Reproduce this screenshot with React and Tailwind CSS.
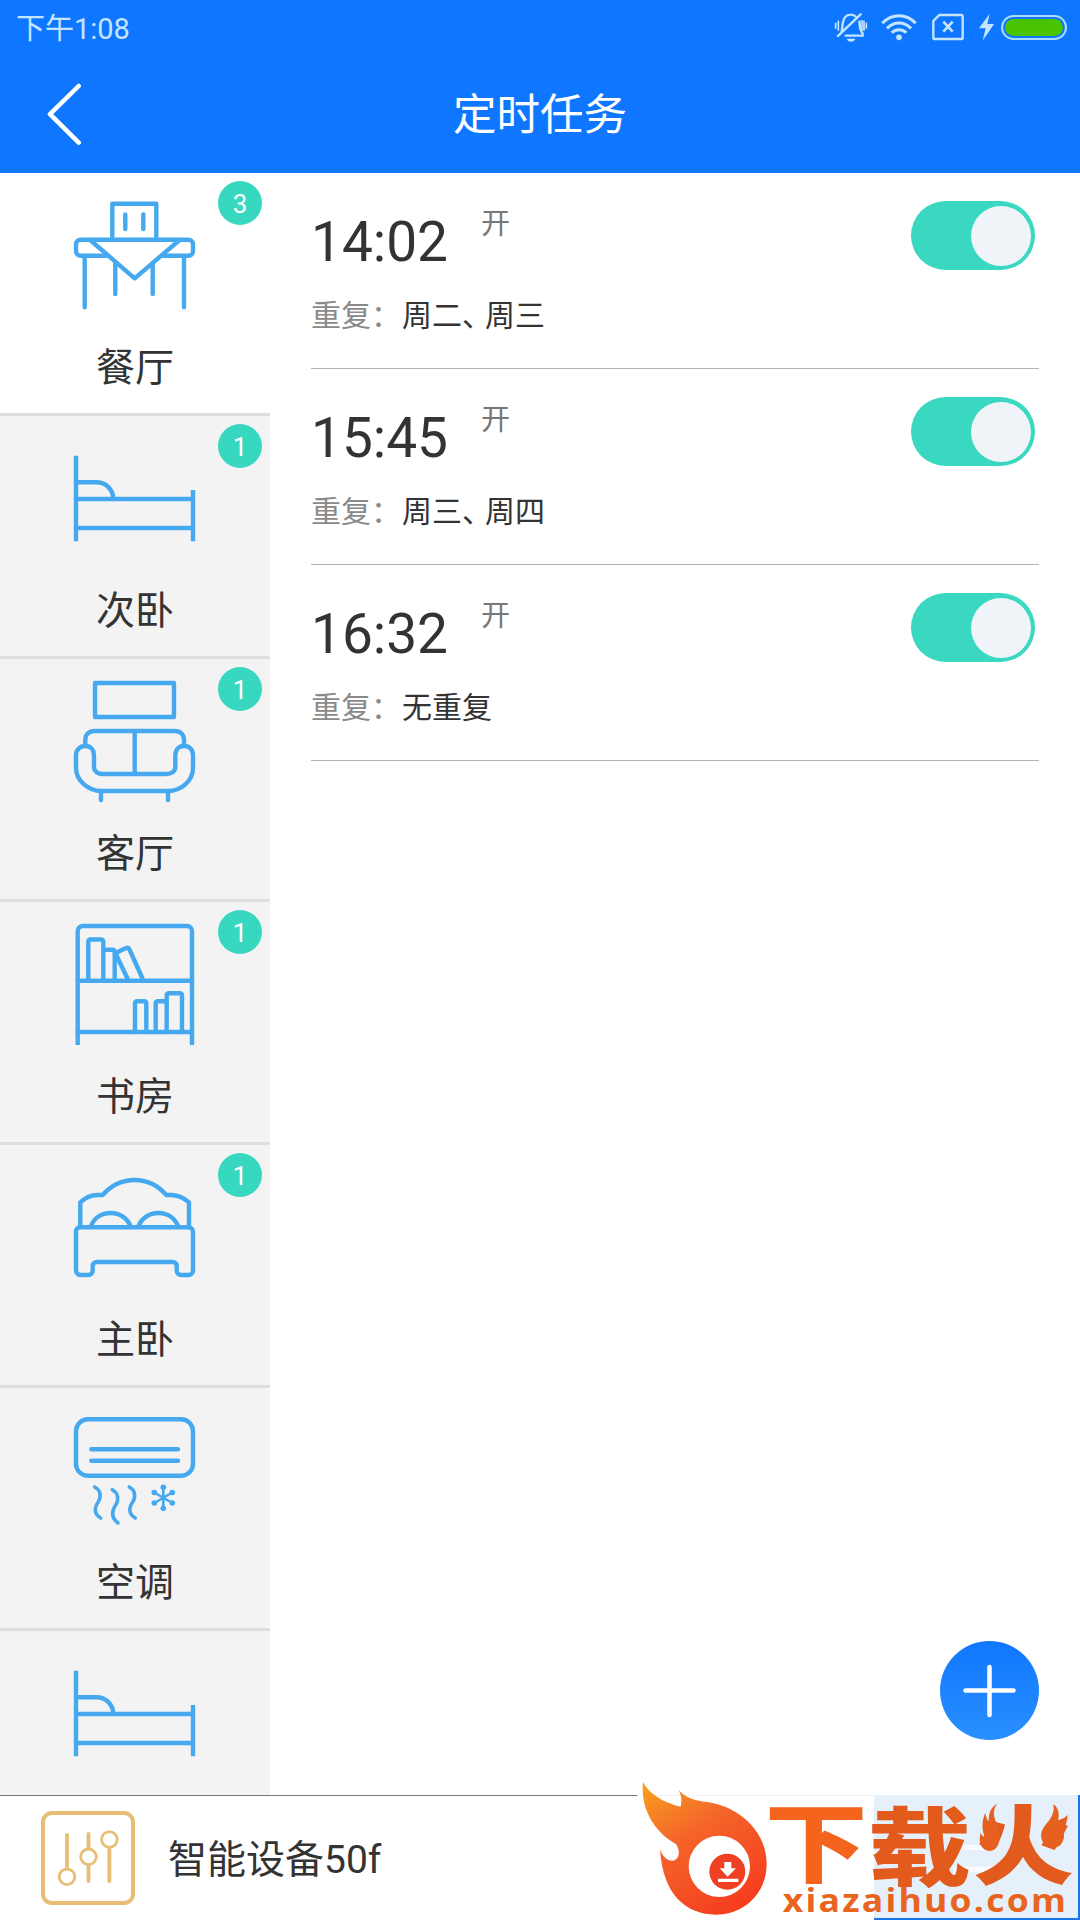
import React, { useState } from 'react';

const TableIcon = () => (
    <>
        <path d="M41.3 48V12.7H85.3V48" />
        <path d="M54.3 23.5V38M72.3 23.5V38" />
        <path d="M36.5 64.7H9.5a4.5 4.5 0 0 1-4.5-4.5V53.2a4.5 4.5 0 0 1 4.5-4.5H117.5a4.5 4.5 0 0 1 4.5 4.5v7a4.5 4.5 0 0 1-4.5 4.5H91" />
        <path d="M19.7 49.5L63.7 87.3L108 49.5" />
        <path d="M13.7 65V116.3M113 65V116.3M44.3 72V103M81.7 72V103" />
    </>
);

const BedIcon = () => (
    <>
        <path strokeLinecap="butt" d="M5 21.7V107.3M122 56V107.3" />
        <path d="M5 65H122M5 94H122" />
        <path d="M5 48.3H25C35 48.3 42.3 55.5 42.3 65" />
    </>
);

const SofaIcon = () => (
    <>
        <path d="M24 6H103V40H24Z" />
        <path d="M14.3 68V63C14.3 57.5 18 54 23.5 54H104C109.5 54 113 57.5 113 63V68M63.7 54V97" />
        <path d="M14.3 69C8.5 69 5 73 5 78.5V91C5 104 18 114 30 114H97C110 114 122 104 122 91V78.5C122 73 119 69 113 69C107.5 69 104.3 73 104.3 78.5V90C104.3 94 101 97 95 97H32C27 97 23 94.5 23 90V78.5C23 73 20 69 14.3 69Z" />
        <path d="M30 114V123M97 114V123" />
    </>
);

const BookshelfIcon = () => (
    <>
        <path strokeLinecap="butt" d="M6.7 125V11a5 5 0 0 1 5-5H116a5 5 0 0 1 5 5V125" />
        <path d="M6.7 60.7H121M6.7 112H121" />
        <path d="M17.3 60V21.5a2 2 0 0 1 2-2H30.3a2 2 0 0 1 2 2V60M32.3 29.7H41.7a2 2 0 0 1 2 2V60" />
        <path d="M57 59.5L45.7 36C45 34 45.5 32.8 47.2 31.8L54.5 28.2C56.5 27.4 57.8 28 58.7 30L71.3 58" />
        <path d="M64 112V83.3a2 2 0 0 1 2-2H73.3a2 2 0 0 1 2 2V112M84.7 112V83.3a2 2 0 0 1 2-2H95.7" />
        <path d="M95.7 112V75.3a2 2 0 0 1 2-2H109a2 2 0 0 1 2 2V112" />
    </>
);

const DoubleBedIcon = () => (
    <>
        <path d="M9.3 64V39.3C14 35 20 32 26 32H31.7C40 22.5 51 17 63.7 17C76.5 17 87 22.5 95.3 32H101C107.5 32.5 113 35 118 39.3V64" />
        <path d="M19.7 63.5C23 55 30.5 50 39.7 50C48.5 50 56.5 55 59.7 63.5M67.3 63.5C70.5 55 78.5 50 87.3 50C96.5 50 104 55 107.3 63.5" />
        <path d="M9 64.3H117.5a4.5 4.5 0 0 1 4.5 4.5V107.5a4.5 4.5 0 0 1-4.5 4.5H110a4.3 4.3 0 0 1-4.3-4.3V103a4 4 0 0 0-4-4H25.7a4 4 0 0 0-4 4V107.7a4.3 4.3 0 0 1-4.3 4.3H9.5a4.5 4.5 0 0 1-4.5-4.5V68.3a4 4 0 0 1 4-4Z" />
    </>
);

const AirIcon = () => (
    <>
        <rect x="5" y="13.3" width="117" height="56.4" rx="12" />
        <path d="M20.3 43.3H107M20.3 54.7H107" />
        <path strokeWidth="3.6" d="M23.7 81C29.5 84 30.5 90 27.5 95.5C22.5 102.5 23.5 108.5 29.7 112M41.3 83.7C47 87 48 93 45 98.5C40 106 41 112.5 47 117M58.3 81C64 84 65 90 62 95.5C57 102.5 58 108.5 64.3 112" />
        <path strokeWidth="2.6" d="M92.3 81V102.7M83.3 86.5L101.3 97M83.3 97L101.3 86.5" />
        <g fill="#46a9f0" stroke="none">
            <circle cx="92.3" cy="81.3" r="2.8" />
            <circle cx="92.3" cy="102.3" r="2.8" />
            <circle cx="83.3" cy="86.5" r="2.8" />
            <circle cx="101.3" cy="86.5" r="2.8" />
            <circle cx="83.3" cy="97" r="2.8" />
            <circle cx="101.3" cy="97" r="2.8" />
        </g>
    </>
);

const rooms = [
    { id: 1, name: '餐厅', count: 3, Icon: TableIcon },
    { id: 2, name: '次卧', count: 1, Icon: BedIcon },
    { id: 3, name: '客厅', count: 1, Icon: SofaIcon },
    { id: 4, name: '书房', count: 1, Icon: BookshelfIcon },
    { id: 5, name: '主卧', count: 1, Icon: DoubleBedIcon },
    { id: 6, name: '空调', count: 0, Icon: AirIcon },
    { id: 7, name: '', count: 0, Icon: BedIcon },
];

const initialTasks = [
    { id: 1, time: '14:02', repeat: ['周二', '周三'], on: true },
    { id: 2, time: '15:45', repeat: ['周三', '周四'], on: true },
    { id: 3, time: '16:32', repeat: [], on: true },
];

function StatusBar() {
    return (
        <div className="flex h-[56px] items-start justify-between pl-4 pr-[13px] text-[#c4e4ff]">
            <span className="pt-[1px] text-[29px] leading-[56px]">下午1:08</span>
            <div className="flex h-[54px] items-center">
                <svg className="mr-[13px] h-[30px] w-[34px]" viewBox="0 0 102 90" fill="none" stroke="currentColor" strokeWidth="7">
                    <path d="M22 62C26 52 24 42 27 30C30 16 38 9 48 8C56 7 62 10 66 15M76 26C78 40 76 54 86 64V71H32" />
                    <path d="M10 74L82 5" />
                    <path strokeWidth="5" d="M5 32V50M13 26V56M84 24V56M90 26V56M97 32V50" />
                    <path fill="currentColor" stroke="none" d="M38 80H64C62 86 57 89 51 89S40 86 38 80Z" />
                </svg>
                <svg className="mr-[15px] h-[28px] w-[36px]" viewBox="0 0 108 84" fill="none" stroke="currentColor" strokeWidth="9">
                    <path d="M4 31C32 1 76 1 104 31" />
                    <path d="M18 46C39 25 69 25 90 46" />
                    <path d="M32 59C45 47 63 47 76 59" />
                    <circle cx="54" cy="73" r="8.5" fill="currentColor" stroke="none" />
                </svg>
                <svg className="mr-[15px] h-[28px] w-[32px]" viewBox="0 0 96 84" fill="none" stroke="currentColor" strokeWidth="7">
                    <path d="M22 6H88Q92 6 92 10V74Q92 78 88 78H8Q4 78 4 74V24Z" />
                    <path strokeWidth="8" d="M34 26L62 56M62 26L34 56" />
                </svg>
                <svg className="mr-[7px] h-[28px] w-[15px]" viewBox="0 0 45 84" fill="currentColor">
                    <path d="M32 2L0 46H20L11 83L45 33H25Z" />
                </svg>
                <div className="h-[25px] w-[66px] rounded-full border-2 border-[#a9dcff] p-[2px]">
                    <div className="h-full w-full rounded-full bg-[#48c400]" />
                </div>
            </div>
        </div>
    );
}

function RoomItem({ room, active, onSelect }) {
    const { Icon } = room;
    return (
        <div
            onClick={onSelect}
            className={`relative flex h-[243px] shrink-0 cursor-pointer flex-col items-center border-b-[3px] border-[#dedede] pt-[18px] ${active ? 'bg-white' : 'bg-[#f3f3f3]'}`}
        >
            <svg className="h-[128px] w-[128px]" viewBox="0 0 128 128" fill="none" stroke="#46a9f0" strokeWidth="4.4" strokeLinecap="round" strokeLinejoin="round">
                <Icon />
            </svg>
            {room.name && <span className="mt-6 text-[39px] leading-[50px] text-[#333]">{room.name}</span>}
            {room.count > 0 && (
                <span className="absolute right-2 top-2 h-11 w-11 rounded-full bg-[#38d8c0] text-center text-[26px] leading-[46px] text-white">
                    {room.count}
                </span>
            )}
        </div>
    );
}

function Toggle({ on, onChange }) {
    return (
        <button
            onClick={onChange}
            className={`mr-1 mt-7 flex h-[69px] w-[124px] items-center rounded-full px-1 ${on ? 'justify-end bg-[#3ad8c0]' : 'justify-start bg-gray-300'}`}
        >
            <span className="h-[60px] w-[60px] rounded-full bg-[#f0f4f8]" />
        </button>
    );
}

function TaskRow({ task, onToggle }) {
    return (
        <div className="flex h-[196px] items-start justify-between border-b border-[#b4b4b4]">
            <div>
                <div className="flex pt-[41px]">
                    <span className="w-[136px] text-[55px] leading-[56px] text-[#333]">{task.time}</span>
                    <span className="-mt-[10px] ml-[34px] text-[29px] leading-[40px] text-[#777]">开</span>
                </div>
                <div className="mt-[26px] flex text-[30px] leading-[40px]">
                    <span className="w-[91px] text-[#8a8a8a]">重复：</span>
                    <span className="text-[#333]">
                        {task.repeat.length === 0 && '无重复'}
                        {task.repeat.map((day, i) => (
                            <React.Fragment key={day}>
                                {i > 0 && <span className="tracking-[-7px]">、</span>}
                                {day}
                            </React.Fragment>
                        ))}
                    </span>
                </div>
            </div>
            <Toggle on={task.on} onChange={onToggle} />
        </div>
    );
}

function SiteBadge() {
    return (
        <svg className="absolute bottom-0 right-0 h-[150px] w-[460px]" viewBox="0 0 1380 450">
            <defs>
                <linearGradient id="flame" x1="0" y1="0" x2="0.6" y2="1">
                    <stop offset="0" stopColor="#f9a11f" />
                    <stop offset="0.45" stopColor="#f4652a" />
                    <stop offset="1" stopColor="#f53f1f" />
                </linearGradient>
            </defs>
            <rect x="51" y="70" width="711" height="380" fill="#fff" />
            <rect x="51" y="75" width="711" height="2" fill="#e9e9e9" />
            <rect x="762" y="75" width="618" height="375" fill="#1a74ec" />
            <rect x="762" y="75" width="612" height="369" fill="#e5f0fb" />
            <path d="M1000 232H1110M1000 298H1130" stroke="#f8fbff" strokeWidth="16" />
            <path
                fill="url(#flame)"
                d="M69 36C84 68 128 98 182 110C186 92 184 76 176 60C196 84 226 92 262 96C366 112 440 190 440 282C440 368 374 434 288 434C200 434 128 376 120 238C128 262 144 274 160 272C178 268 182 244 168 222C108 190 60 120 69 36Z"
            />
            <circle cx="298" cy="289" r="92" fill="#fff" />
            <circle cx="322" cy="305" r="54" fill="#ee4023" />
            <path fill="#fff" d="M313 276H334V295H348L323 320L299 295H313ZM294 326H355V336H294Z" />
            <g fontFamily="'Noto Sans CJK SC', sans-serif" fontWeight="900">
                <text x="434" y="318" fontSize="261" textLength="308" lengthAdjust="spacingAndGlyphs" fill="#f4641c">下</text>
                <text x="744" y="326" fontSize="256" textLength="308" lengthAdjust="spacingAndGlyphs" fill="#e25a1c">载</text>
                <text x="1058" y="324" fontSize="260" textLength="304" lengthAdjust="spacingAndGlyphs" fill="#e25a1c">火</text>
            </g>
            <g fill="#e6601f">
                <path d="M1131 102C1118 120 1120 140 1130 160C1144 188 1144 240 1110 243C1082 242 1074 214 1082 188C1086 198 1090 200 1094 200C1084 176 1086 150 1096 128C1098 142 1102 150 1106 154C1106 130 1112 112 1131 102Z" />
                <path d="M1300 102C1318 116 1318 134 1314 150C1322 148 1336 144 1342 134C1344 150 1336 168 1328 184C1330 188 1332 192 1332 200C1330 220 1316 234 1298 234C1274 230 1260 212 1264 190C1270 160 1308 146 1300 102Z" />
            </g>
            <text x="488" y="425" textLength="856" lengthAdjust="spacingAndGlyphs" fontFamily="'Open Sans', sans-serif" fontWeight="700" fontSize="96" letterSpacing="6" fill="#e8651f">
                xiazaihuo.com
            </text>
        </svg>
    );
}

function App() {
    const [activeRoom, setActiveRoom] = useState(1);
    const [tasks, setTasks] = useState(initialTasks);

    const toggleTask = (id) => {
        setTasks(tasks.map(task => (task.id === id ? { ...task, on: !task.on } : task)));
    };

    return (
        <div className="relative flex h-[1920px] w-[1080px] flex-col overflow-hidden bg-white font-[Roboto,'Noto_Sans_CJK_SC',sans-serif]">
            <header className="h-[173px] shrink-0 bg-[#0f77ff]">
                <StatusBar />
                <div className="grid h-[117px] grid-cols-3 items-center">
                    <svg className="ml-[46px] h-[64px] w-[38px]" viewBox="0 0 38 64" fill="none" stroke="#fff" strokeWidth="4.5" strokeLinecap="round" strokeLinejoin="round">
                        <path d="M32.7 3L4 31.2L32.7 59.7" />
                    </svg>
                    <h1 className="pt-[3px] text-center text-[43.5px] leading-[60px] text-white">定时任务</h1>
                </div>
            </header>

            <div className="flex min-h-0 flex-1">
                <aside className="flex w-[270px] shrink-0 flex-col overflow-hidden">
                    {rooms.map(room => (
                        <RoomItem key={room.id} room={room} active={room.id === activeRoom} onSelect={() => setActiveRoom(room.id)} />
                    ))}
                </aside>
                <main className="flex-1 px-[41px]">
                    {tasks.map(task => (
                        <TaskRow key={task.id} task={task} onToggle={() => toggleTask(task.id)} />
                    ))}
                </main>
            </div>

            <button className="absolute bottom-[180px] right-[41px] flex h-[99px] w-[99px] items-center justify-center rounded-full bg-linear-to-b from-[#0f77ff] to-[#2a8fff]">
                <svg className="h-[54px] w-[54px]" viewBox="0 0 54 54" stroke="#fff" strokeWidth="4.5" strokeLinecap="round">
                    <path d="M26.5 3V51M2.5 26.5H50.5" />
                </svg>
            </button>

            <footer className="relative flex h-[125px] shrink-0 items-center border-t border-[#777] bg-white pl-[41px]">
                <svg className="h-[94px] w-[94px]" viewBox="0 0 94 94" fill="none" stroke="#e8bd76" strokeWidth="4" strokeLinecap="round">
                    <rect x="2" y="2" width="90" height="90" rx="9" />
                    <path strokeWidth="3.8" d="M26 24V56M47.5 23V37M47.5 54V70M68.4 37V70" />
                    <g strokeWidth="2.8">
                        <circle cx="26" cy="65.8" r="7.8" />
                        <circle cx="47.5" cy="45.8" r="7.8" />
                        <circle cx="68.4" cy="28.4" r="7.8" />
                    </g>
                </svg>
                <span className="ml-[33px] pt-[3px] text-[39px] leading-[56px] text-[#333]">智能设备50f</span>
                <SiteBadge />
            </footer>
        </div>
    );
}

export default App;
